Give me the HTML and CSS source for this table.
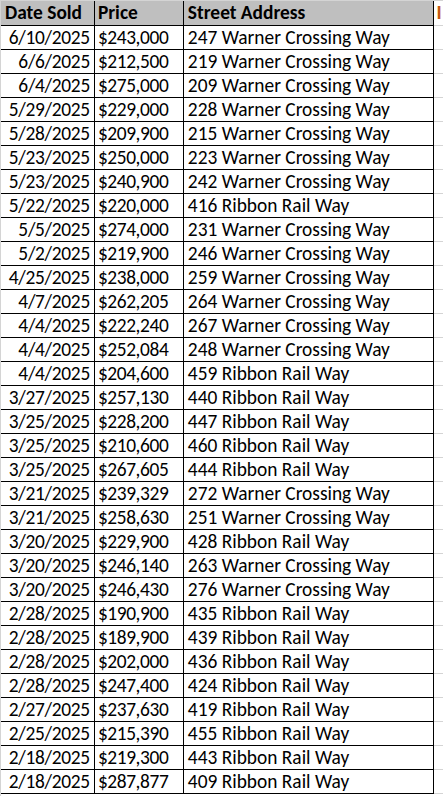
FILE: index.html
```html
<!DOCTYPE html>
<html>
<head>
<meta charset="utf-8">
<link rel="stylesheet" href="styles.css">
</head>
<body>
<div class="sheet">
<table class="grid">
<thead>
<tr><th class="c1">Date Sold</th><th class="c2">Price</th><th class="c3">Street Address</th><th class="c4"><span class="next">I</span></th></tr>
</thead>
<tbody>
<tr><td class="c1">6/10/2025</td><td class="c2">$243,000</td><td class="c3">247 Warner Crossing Way</td><td class="c4"></td></tr>
<tr><td class="c1">6/6/2025</td><td class="c2">$212,500</td><td class="c3">219 Warner Crossing Way</td><td class="c4"></td></tr>
<tr><td class="c1">6/4/2025</td><td class="c2">$275,000</td><td class="c3">209 Warner Crossing Way</td><td class="c4"></td></tr>
<tr><td class="c1">5/29/2025</td><td class="c2">$229,000</td><td class="c3">228 Warner Crossing Way</td><td class="c4"></td></tr>
<tr><td class="c1">5/28/2025</td><td class="c2">$209,900</td><td class="c3">215 Warner Crossing Way</td><td class="c4"></td></tr>
<tr><td class="c1">5/23/2025</td><td class="c2">$250,000</td><td class="c3">223 Warner Crossing Way</td><td class="c4"></td></tr>
<tr><td class="c1">5/23/2025</td><td class="c2">$240,900</td><td class="c3">242 Warner Crossing Way</td><td class="c4"></td></tr>
<tr><td class="c1">5/22/2025</td><td class="c2">$220,000</td><td class="c3">416 Ribbon Rail Way</td><td class="c4"></td></tr>
<tr><td class="c1">5/5/2025</td><td class="c2">$274,000</td><td class="c3">231 Warner Crossing Way</td><td class="c4"></td></tr>
<tr><td class="c1">5/2/2025</td><td class="c2">$219,900</td><td class="c3">246 Warner Crossing Way</td><td class="c4"></td></tr>
<tr><td class="c1">4/25/2025</td><td class="c2">$238,000</td><td class="c3">259 Warner Crossing Way</td><td class="c4"></td></tr>
<tr><td class="c1">4/7/2025</td><td class="c2">$262,205</td><td class="c3">264 Warner Crossing Way</td><td class="c4"></td></tr>
<tr><td class="c1">4/4/2025</td><td class="c2">$222,240</td><td class="c3">267 Warner Crossing Way</td><td class="c4"></td></tr>
<tr><td class="c1">4/4/2025</td><td class="c2">$252,084</td><td class="c3">248 Warner Crossing Way</td><td class="c4"></td></tr>
<tr><td class="c1">4/4/2025</td><td class="c2">$204,600</td><td class="c3">459 Ribbon Rail Way</td><td class="c4"></td></tr>
<tr><td class="c1">3/27/2025</td><td class="c2">$257,130</td><td class="c3">440 Ribbon Rail Way</td><td class="c4"></td></tr>
<tr><td class="c1">3/25/2025</td><td class="c2">$228,200</td><td class="c3">447 Ribbon Rail Way</td><td class="c4"></td></tr>
<tr><td class="c1">3/25/2025</td><td class="c2">$210,600</td><td class="c3">460 Ribbon Rail Way</td><td class="c4"></td></tr>
<tr><td class="c1">3/25/2025</td><td class="c2">$267,605</td><td class="c3">444 Ribbon Rail Way</td><td class="c4"></td></tr>
<tr><td class="c1">3/21/2025</td><td class="c2">$239,329</td><td class="c3">272 Warner Crossing Way</td><td class="c4"></td></tr>
<tr><td class="c1">3/21/2025</td><td class="c2">$258,630</td><td class="c3">251 Warner Crossing Way</td><td class="c4"></td></tr>
<tr><td class="c1">3/20/2025</td><td class="c2">$229,900</td><td class="c3">428 Ribbon Rail Way</td><td class="c4"></td></tr>
<tr><td class="c1">3/20/2025</td><td class="c2">$246,140</td><td class="c3">263 Warner Crossing Way</td><td class="c4"></td></tr>
<tr><td class="c1">3/20/2025</td><td class="c2">$246,430</td><td class="c3">276 Warner Crossing Way</td><td class="c4"></td></tr>
<tr><td class="c1">2/28/2025</td><td class="c2">$190,900</td><td class="c3">435 Ribbon Rail Way</td><td class="c4"></td></tr>
<tr><td class="c1">2/28/2025</td><td class="c2">$189,900</td><td class="c3">439 Ribbon Rail Way</td><td class="c4"></td></tr>
<tr><td class="c1">2/28/2025</td><td class="c2">$202,000</td><td class="c3">436 Ribbon Rail Way</td><td class="c4"></td></tr>
<tr><td class="c1">2/28/2025</td><td class="c2">$247,400</td><td class="c3">424 Ribbon Rail Way</td><td class="c4"></td></tr>
<tr><td class="c1">2/27/2025</td><td class="c2">$237,630</td><td class="c3">419 Ribbon Rail Way</td><td class="c4"></td></tr>
<tr><td class="c1">2/25/2025</td><td class="c2">$215,390</td><td class="c3">455 Ribbon Rail Way</td><td class="c4"></td></tr>
<tr><td class="c1">2/18/2025</td><td class="c2">$219,300</td><td class="c3">443 Ribbon Rail Way</td><td class="c4"></td></tr>
<tr><td class="c1">2/18/2025</td><td class="c2">$287,877</td><td class="c3">409 Ribbon Rail Way</td><td class="c4"></td></tr>
</tbody>
</table>
</div>
</body>
</html>
```
FILE: styles.css
```css
html, body {
  margin: 0;
  padding: 0;
  background: #ffffff;
}
.sheet {
  width: 443px;
  height: 796px;
  overflow: hidden;
  border-left: 1px solid #d4d4d4;
  border-top: 1px solid #d4d4d4;
  box-sizing: border-box;
}
.grid {
  border-collapse: collapse;
  table-layout: fixed;
  font-family: Carlito, Calibri, Lato, sans-serif;
  font-size: 19.4px;
  color: #000000;
}
.grid th, .grid td {
  height: 23px;
  padding: 0;
  line-height: 23px;
  white-space: nowrap;
  overflow: hidden;
  border-bottom: 1px solid #000000;
  border-right: 1px solid #000000;
  box-sizing: border-box;
}
.grid th {
  height: 24px;
  background: #bfbfbf;
  font-weight: bold;
  text-align: left;
}
.grid .c1 { width: 94px; }
.grid .c2 { width: 90px; }
.grid .c3 { width: 253px; }
.grid .c4 { width: 10px; border-right: none; border-bottom-color: #d4d4d4; background: #ffffff; }
.grid th.c1 { padding-left: 4px; }
.grid td.c1 { text-align: right; padding-right: 4px; letter-spacing: -0.3px; }
.grid .c2 { padding-left: 3px; }
.grid td.c2 { letter-spacing: -0.4px; }
.grid .c3 { padding-left: 4px; }
.grid .c4 { padding-left: 3px; }
.next {
  color: #c65911;
  font-weight: bold;
}
```
